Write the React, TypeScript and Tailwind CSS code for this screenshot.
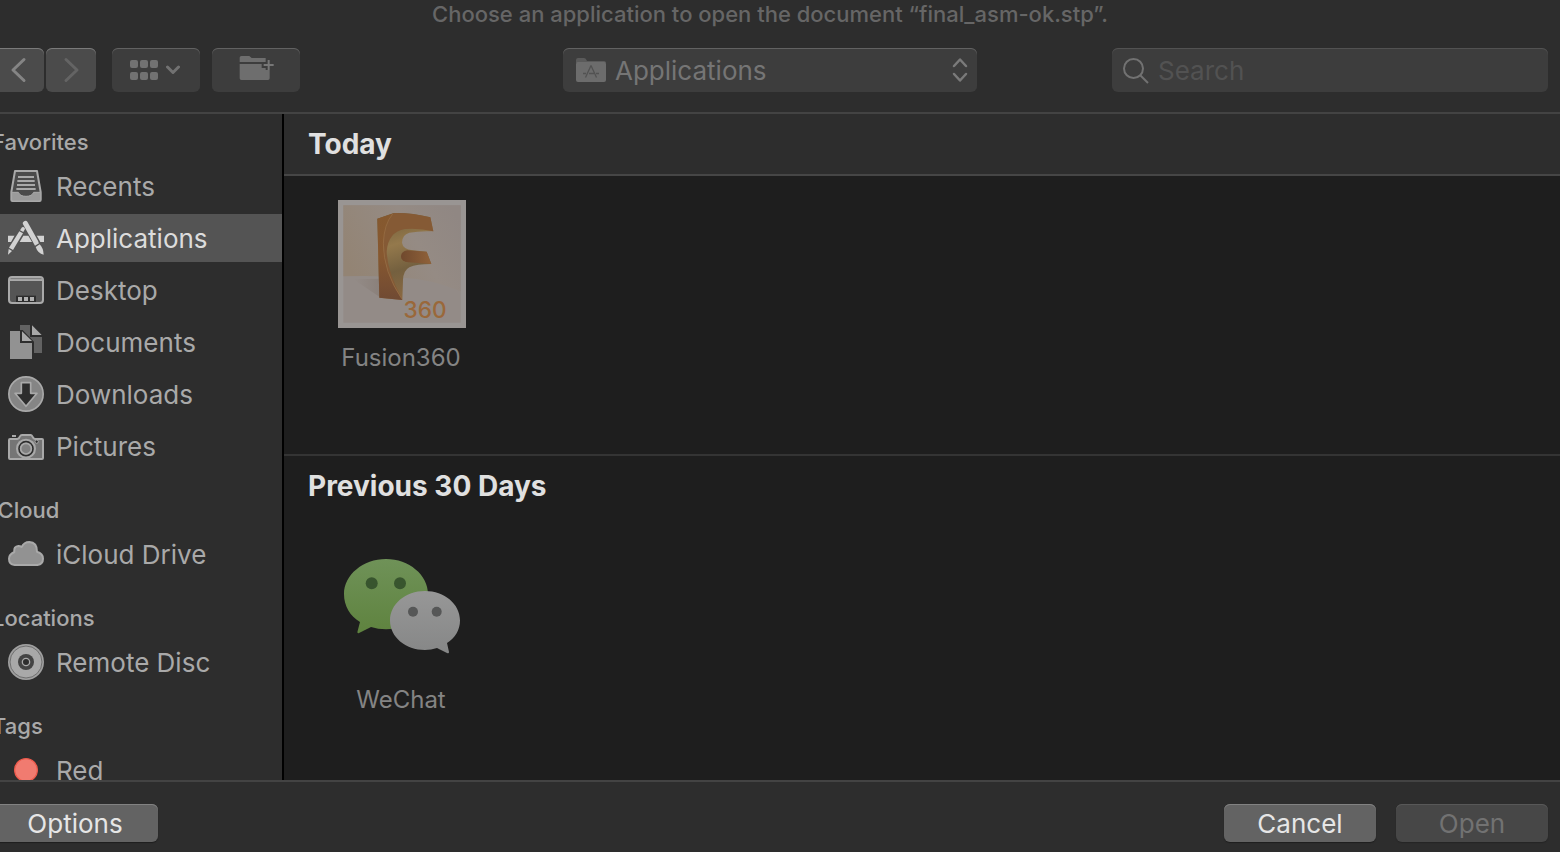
import type { ReactNode } from "react";

const RecentsIcon = () => (
  <svg viewBox="24 174 108 108" className="size-9 shrink-0" aria-hidden="true">
    <path d="M45 183H111L122 246V270Q122 273 119 273H37Q34 273 34 270V246Z" fill="#4b4b4b" stroke="#a9a9a9" strokeWidth="6" strokeLinejoin="round" />
    <path d="M35 247H55Q60 259 78 259T101 247H122V268Q122 273 117 273H39Q35 273 35 268Z" fill="#9a9a9a" stroke="#a9a9a9" strokeWidth="3" />
    <path d="M54 201H102M52 213H104M51 225H105M49 237H107" stroke="#a9a9a9" strokeWidth="6" />
  </svg>
);

const ApplicationsIcon = () => (
  <svg viewBox="24 330 108 108" className="size-9 shrink-0" aria-hidden="true">
    <path d="M24 377H132V396H24Z" fill="#d2d2d2" />
    <path d="M76 340L122 422M72 350L28 430" stroke="#545454" strokeWidth="24" />
    <path d="M67 372L58 396H98L80 364Z" fill="#545454" />
    <path d="M70 377H85L96 396H59Z" fill="#d2d2d2" />
    <path d="M76 340L107 395" stroke="#d2d2d2" strokeWidth="15" strokeLinecap="round" />
    <path d="M101 400L113 393L117 400L105 407Z" fill="#d2d2d2" />
    <path d="M107 411L119 403Q130 414 131 434Q113 430 107 411Z" fill="#d2d2d2" />
    <path d="M66 352Q73 348 75 357L70 366L60 361Z" fill="#d2d2d2" />
    <path d="M58 364L69 370L39 420L27 413Z" fill="#d2d2d2" />
    <path d="M26 417L36 423L24 434Z" fill="#d2d2d2" />
  </svg>
);

const DesktopIcon = () => (
  <svg viewBox="24 21 108 108" className="size-9 shrink-0" aria-hidden="true">
    <rect x="27" y="36" width="102" height="78" rx="9" fill="#555555" stroke="#a9a9a9" strokeWidth="6" />
    <path d="M29 40H127V48H29Z" fill="#a9a9a9" />
    <path d="M32 41H124" stroke="#7d7d7d" strokeWidth="3" />
    <path d="M48 92H108V111H48Z" fill="#2d2d2d" />
    <path d="M54 96H66V108H54ZM72 96H84V108H72ZM90 96H102V108H90Z" fill="#b0b0b0" />
  </svg>
);

const DocumentsIcon = () => (
  <svg viewBox="24 177 108 108" className="size-9 shrink-0" aria-hidden="true">
    <path d="M60 180H90V216H126V264H102V230L68 195H60Z" fill="#626262" />
    <path d="M96 181L125 210H96Z" fill="#a9a9a9" />
    <path d="M30 198H60V234H96V282H30Z" fill="#929292" />
    <path d="M66 199L96 228H66Z" fill="#a9a9a9" />
  </svg>
);

const DownloadsIcon = () => (
  <svg viewBox="24 333 108 108" className="size-9 shrink-0" aria-hidden="true">
    <circle cx="78" cy="387" r="51.500" fill="#858585" stroke="#a9a9a9" strokeWidth="5" />
    <path d="M64 353H92V385H111L78 424L45 385H64Z" fill="#2d2d2d" stroke="#a9a9a9" strokeWidth="5" strokeLinejoin="round" />
  </svg>
);

const PicturesIcon = () => (
  <svg viewBox="24 489 108 108" className="size-9 shrink-0" aria-hidden="true">
    <path d="M36 510H48V516H36Z" fill="#a9a9a9" />
    <path d="M30 522H52Q58 521 60 514Q62 510 66 510H92Q95 510 97 514Q100 521 105 522H126Q129 522 129 525V579Q129 582 126 582H30Q27 582 27 579V525Q27 522 30 522Z" fill="#757575" stroke="#a9a9a9" strokeWidth="6" />
    <circle cx="78" cy="551" r="30" fill="#a9a9a9" />
    <circle cx="78" cy="551" r="21" fill="#757575" stroke="#2d2d2d" strokeWidth="5" />
    <circle cx="78" cy="551" r="16" fill="#808080" stroke="#a9a9a9" strokeWidth="5" />
    <circle cx="110" cy="530" r="5" fill="#2d2d2d" stroke="#a9a9a9" strokeWidth="3" />
  </svg>
);

const CloudIcon = () => (
  <svg viewBox="24 168 108 108" className="size-9 shrink-0" aria-hidden="true">
    <path d="M44 255Q27 253 27 236Q27 223 43 216Q41 199 55 198Q61 198 65 201Q72 186 88 186Q111 187 111 215Q129 220 129 236Q129 252 112 255Z" fill="#929292" stroke="#a9a9a9" strokeWidth="6" strokeLinejoin="round" />
  </svg>
);

const DiscIcon = () => (
  <svg viewBox="24 492 108 108" className="size-9 shrink-0" aria-hidden="true">
    <circle cx="78" cy="546" r="54" fill="#a0a0a0" />
    <circle cx="78" cy="546" r="48" fill="#a9a9a9" stroke="#6f6f6f" strokeWidth="3" />
    <circle cx="78" cy="546" r="24" fill="#444444" />
    <circle cx="78" cy="546" r="11" fill="#2d2d2d" stroke="#a9a9a9" strokeWidth="4" />
  </svg>
);

const RedTagIcon = () => (
  <svg viewBox="24 186 108 108" className="size-9 shrink-0" aria-hidden="true">
    <circle cx="78" cy="240" r="34" fill="#f17b70" stroke="#ee5a4c" strokeWidth="4" />
  </svg>
);

const FusionIcon = () => (
  <svg viewBox="54 60 384 384" className="size-32" aria-hidden="true">
    <defs>
      <linearGradient id="sky" x1="0" y1="0.600" x2="1" y2="0.200">
        <stop offset="0" stopColor="#938474" />
        <stop offset="0.600" stopColor="#958b84" />
        <stop offset="1" stopColor="#908783" />
      </linearGradient>
      <linearGradient id="shade" x1="0" y1="0" x2="1" y2="0">
        <stop offset="0" stopColor="#8c827c" stopOpacity="0" />
        <stop offset="1" stopColor="#8a807a" />
      </linearGradient>
      <linearGradient id="stem" x1="0" y1="0" x2="0" y2="1">
        <stop offset="0" stopColor="#85592f" />
        <stop offset="0.500" stopColor="#875830" />
        <stop offset="1" stopColor="#704a33" />
      </linearGradient>
      <linearGradient id="curve" x1="0.300" y1="0" x2="0.500" y2="1">
        <stop offset="0" stopColor="#6f5b3a" />
        <stop offset="0.350" stopColor="#94794c" />
        <stop offset="0.650" stopColor="#74603f" />
        <stop offset="1" stopColor="#8c6a42" />
      </linearGradient>
      <linearGradient id="arm" x1="0" y1="0" x2="1" y2="0">
        <stop offset="0" stopColor="#70492d" />
        <stop offset="1" stopColor="#90623a" />
      </linearGradient>
    </defs>
    <path d="M54 60H438V444H54Z" fill="#999593" />
    <path d="M70 76H422V428H70Z" fill="#938b87" />
    <path d="M70 76H422V334Q330 296 250 293Q170 285 70 289Z" fill="url(#sky)" />
    <path d="M100 298L178 350L180 296Z" fill="url(#shade)" />
    <path d="M172 116L222 99Q275 98 331 112L340 154Q300 152 268 158Q246 164 246 188Q248 207 278 211L320 215L334 252Q290 252 268 262Q250 272 249 300L247 360L178 353Z" fill="url(#curve)" />
    <path d="M172 116L222 99Q193 128 190 190Q190 275 247 360L178 353Z" fill="url(#stem)" />
    <path d="M222 99Q275 98 331 112L340 154Q300 144 255 147Q204 156 200 215Q202 275 246 356Q191 275 190 190Q193 128 222 99Z" fill="#855a35" />
    <path d="M218 102Q192 132 190 190Q190 275 245 356" fill="none" stroke="#9c7045" strokeWidth="2" />
    <path d="M262 211L320 215L334 252L264 247Q243 243 243 230Q243 214 262 211Z" fill="url(#arm)" />
    <text x="315" y="414" textAnchor="middle" fontSize="68" fontWeight="500" fill="#9a683a" fontFamily="Inter, sans-serif">360</text>
  </svg>
);

const WeChatIcon = () => (
  <svg viewBox="0 0 128 128" className="size-32" aria-hidden="true">
    <defs>
      <linearGradient id="green" x1="0" y1="0" x2="0" y2="1">
        <stop offset="0" stopColor="#6f9258" />
        <stop offset="1" stopColor="#5f833f" />
      </linearGradient>
      <linearGradient id="silver" x1="0" y1="0" x2="0" y2="1">
        <stop offset="0" stopColor="#979797" />
        <stop offset="1" stopColor="#868787" />
      </linearGradient>
    </defs>
    <path d="M48 17C71 17 90 33 90 52S71 87.300 48 87.300Q40 87.300 33 85L21 91Q19 92 19.500 89.500L22 80C12 74 6 64 6 52C6 33 25 17 48 17Z" fill="url(#green)" />
    <path d="M87 49C106.500 49 122 62 122 78.500C122 88 117 96 109 101L111 110Q111 112 109 111L99 106Q93 108 87 108C67.500 108 52 95 52 78.500S67.500 49 87 49Z" fill="url(#silver)" />
    <circle cx="33.700" cy="41.300" r="6" fill="#38552e" />
    <circle cx="62" cy="41.300" r="6" fill="#38552e" />
    <circle cx="75" cy="69.700" r="5" fill="#565757" />
    <circle cx="98.700" cy="69.700" r="5" fill="#565757" />
  </svg>
);

type Place = { name: string; icon: ReactNode; active?: boolean };

const groups: { title: string; places: Place[] }[] = [
  {
    title: "Favorites",
    places: [
      { name: "Recents", icon: <RecentsIcon /> },
      { name: "Applications", icon: <ApplicationsIcon />, active: true },
      { name: "Desktop", icon: <DesktopIcon /> },
      { name: "Documents", icon: <DocumentsIcon /> },
      { name: "Downloads", icon: <DownloadsIcon /> },
      { name: "Pictures", icon: <PicturesIcon /> },
    ],
  },
  { title: "iCloud", places: [{ name: "iCloud Drive", icon: <CloudIcon /> }] },
  { title: "Locations", places: [{ name: "Remote Disc", icon: <DiscIcon /> }] },
  { title: "Tags", places: [{ name: "Red", icon: <RedTagIcon /> }] },
];

function Sidebar() {
  return (
    <nav aria-label="Places" className="flex w-[304px] shrink-0 flex-col gap-5 overflow-hidden border-r-2 border-black pt-2">
      {groups.map((group) => (
        <section key={group.title} className="shrink-0">
          <h2 className="pl-3 text-[22px] leading-10 font-medium text-[#a9a9a9]">{group.title}</h2>
          <ul className="flex flex-col gap-1">
            {group.places.map((place) => (
              <li key={place.name}>
                <button
                  type="button"
                  className={
                    place.active
                      ? "flex h-12 w-full items-center gap-3 bg-[#545454] pl-7 text-[#dcdcdc]"
                      : "flex h-12 w-full items-center gap-3 pl-7 text-[#a9a9a9]"
                  }
                >
                  {place.icon}
                  <span>{place.name}</span>
                </button>
              </li>
            ))}
          </ul>
        </section>
      ))}
    </nav>
  );
}

function AppTile({ name, icon }: { name: string; icon: ReactNode }) {
  return (
    <button type="button" className="mx-4 mt-6 flex w-[204px] flex-col items-center gap-3 text-2xl leading-9 text-[#848484]">
      {icon}
      <span className="pr-0.5">{name}</span>
    </button>
  );
}

function Toolbar() {
  return (
    <div className="grid grid-cols-[1fr_auto_1fr] py-5 pr-3 pl-3">
      <div className="flex">
        <button type="button" aria-label="Back" className="mr-0.5 flex h-11 w-[52px] items-center justify-end rounded-md bg-[#4b4b4b] pr-3 shadow-[inset_0_1px_0_#7a7a7a]">
          <svg viewBox="0 0 26 26" className="size-[26px]" fill="none" stroke="#858585" strokeWidth="3" strokeLinecap="round" strokeLinejoin="round" aria-hidden="true">
            <path d="M18 2.500L7 13L18 23.500" />
          </svg>
        </button>
        <button type="button" aria-label="Forward" disabled className="mr-4 flex h-11 w-[50px] items-center justify-center rounded-md bg-[#4b4b4b] shadow-[inset_0_1px_0_#7a7a7a]">
          <svg viewBox="0 0 26 26" className="size-[26px]" fill="none" stroke="#646464" strokeWidth="3" strokeLinecap="round" strokeLinejoin="round" aria-hidden="true">
            <path d="M8 2.500L19 13L8 23.500" />
          </svg>
        </button>
        <button type="button" aria-label="Group items" className="mr-3 flex h-11 w-[88px] items-center justify-center gap-2 rounded-md bg-[#3d3d3d] pr-0.5 shadow-[inset_0_1px_0_#626262]">
          <svg viewBox="0 0 28 20" className="h-5 w-7" fill="#727272" aria-hidden="true">
            <rect x="0" y="0" width="8" height="8" rx="2" />
            <rect x="10" y="0" width="8" height="8" rx="2" />
            <rect x="20" y="0" width="8" height="8" rx="2" />
            <rect x="0" y="12" width="8" height="8" rx="2" />
            <rect x="10" y="12" width="8" height="8" rx="2" />
            <rect x="20" y="12" width="8" height="8" rx="2" />
          </svg>
          <svg viewBox="0 0 14 10" className="h-2.5 w-3.5" fill="none" stroke="#727272" strokeWidth="3" strokeLinecap="round" strokeLinejoin="round" aria-hidden="true">
            <path d="M1.500 2L7 7.500L12.500 2" />
          </svg>
        </button>
        <button type="button" aria-label="New folder" className="flex h-11 w-[88px] items-start justify-center rounded-md bg-[#3d3d3d] pt-2 pl-0.5 shadow-[inset_0_1px_0_#626262]">
          <svg viewBox="718 168 108 72" className="h-6 w-9" aria-hidden="true">
            <path d="M720 186V173Q720 168 725 168H749L756 174H798V186Z" fill="#6e6e6e" />
            <path d="M720 192H786V204H798V210H810V235Q810 240 805 240H725Q720 240 720 235Z" fill="#6e6e6e" />
            <path d="M792 195H822M807 180V210" stroke="#3d3d3d" strokeWidth="15" />
            <path d="M792 195H822M807 180V210" stroke="#777777" strokeWidth="6" />
          </svg>
        </button>
      </div>
      <div className="relative w-[414px]">
        <select aria-label="Location" className="h-11 w-full appearance-none rounded-md bg-[#3d3d3d] pr-10 pl-[52px] text-[#757575] shadow-[inset_0_1px_0_#626262]">
          <option>Applications</option>
        </select>
        <svg viewBox="0 0 30 24" className="pointer-events-none absolute top-2.5 left-[13px] h-6 w-[30px]" aria-hidden="true">
          <path d="M0 5V2Q0 0 2 0H8Q10 0 11 3H28Q30 3 30 5Z" fill="#5a5a5a" />
          <rect x="0" y="4" width="30" height="20" rx="2" fill="#6c6c6c" />
          <path d="M15 7.500L9.500 19.500M15 7.500L20.500 19.500M7 15.500H10M13 15.500H18M20 15.500H23" fill="none" stroke="#525252" strokeWidth="1.300" />
        </svg>
        <svg viewBox="0 0 16 26" className="pointer-events-none absolute top-[9px] right-[9px] h-[26px] w-4" fill="none" stroke="#7a7a7a" strokeWidth="2.500" strokeLinecap="round" strokeLinejoin="round" aria-hidden="true">
          <path d="M2 9L8 2.500L14 9M2 17L8 23.500L14 17" />
        </svg>
      </div>
      <div className="relative w-[436px] justify-self-end">
        <input type="search" aria-label="Search" placeholder="Search" className="h-11 w-full rounded-md bg-[#3d3d3d] pr-3 pl-[46px] text-[#a9a9a9] shadow-[inset_0_1px_0_#525252] placeholder:text-[#525252]" />
        <svg viewBox="0 0 26 26" className="pointer-events-none absolute top-2.5 left-[11px] size-[26px]" fill="none" stroke="#727272" strokeWidth="2" aria-hidden="true">
          <circle cx="10.500" cy="10.500" r="9.500" />
          <path d="M17 17L25 25" />
        </svg>
      </div>
    </div>
  );
}

export default function App() {
  return (
    <div className="h-screen overflow-hidden bg-[#2d2d2d] font-[Inter,sans-serif] text-[26px]">
      <div className="-ml-5 flex h-full flex-col">
        <header className="border-b-2 border-[#434343]">
          <h1 className="text-center text-[22px] leading-7 font-medium text-[#666666]">
            Choose an application to open the document “final_asm-ok.stp”.
          </h1>
          <Toolbar />
        </header>
        <div className="flex min-h-0 flex-1">
          <Sidebar />
          <main className="flex-1 overflow-hidden bg-[#1e1e1e]">
            <section className="h-[342px] border-b-2 border-[#343434]">
              <h2 className="border-b-2 border-[#464646] bg-[#2d2d2d] pl-6 text-[28px] leading-[60px] font-bold text-[#e0e0e0]">Today</h2>
              <AppTile name="Fusion360" icon={<FusionIcon />} />
            </section>
            <section>
              <h2 className="border-b-2 border-transparent pl-6 text-[28px] leading-[60px] font-bold text-[#e0e0e0]">Previous 30 Days</h2>
              <AppTile name="WeChat" icon={<WeChatIcon />} />
            </section>
          </main>
        </div>
        <footer className="flex gap-5 border-t-2 border-[#434343] px-3 pt-[22px] pb-2.5">
          <button type="button" className="mr-auto h-[38px] w-[166px] rounded-md bg-[#636363] pb-0.5 text-[#e6e6e6] shadow-[inset_0_1px_0_#828282,0_1px_1px_#1e1e1e]">Options</button>
          <button type="button" className="h-[38px] w-[152px] rounded-md bg-[#636363] pb-0.5 text-[#e6e6e6] shadow-[inset_0_1px_0_#828282,0_1px_1px_#1e1e1e]">Cancel</button>
          <button type="button" disabled className="h-[38px] w-[152px] rounded-md bg-[#474747] pb-0.5 text-[#727272] shadow-[inset_0_1px_0_#585858,0_1px_1px_#252525]">Open</button>
        </footer>
      </div>
    </div>
  );
}
